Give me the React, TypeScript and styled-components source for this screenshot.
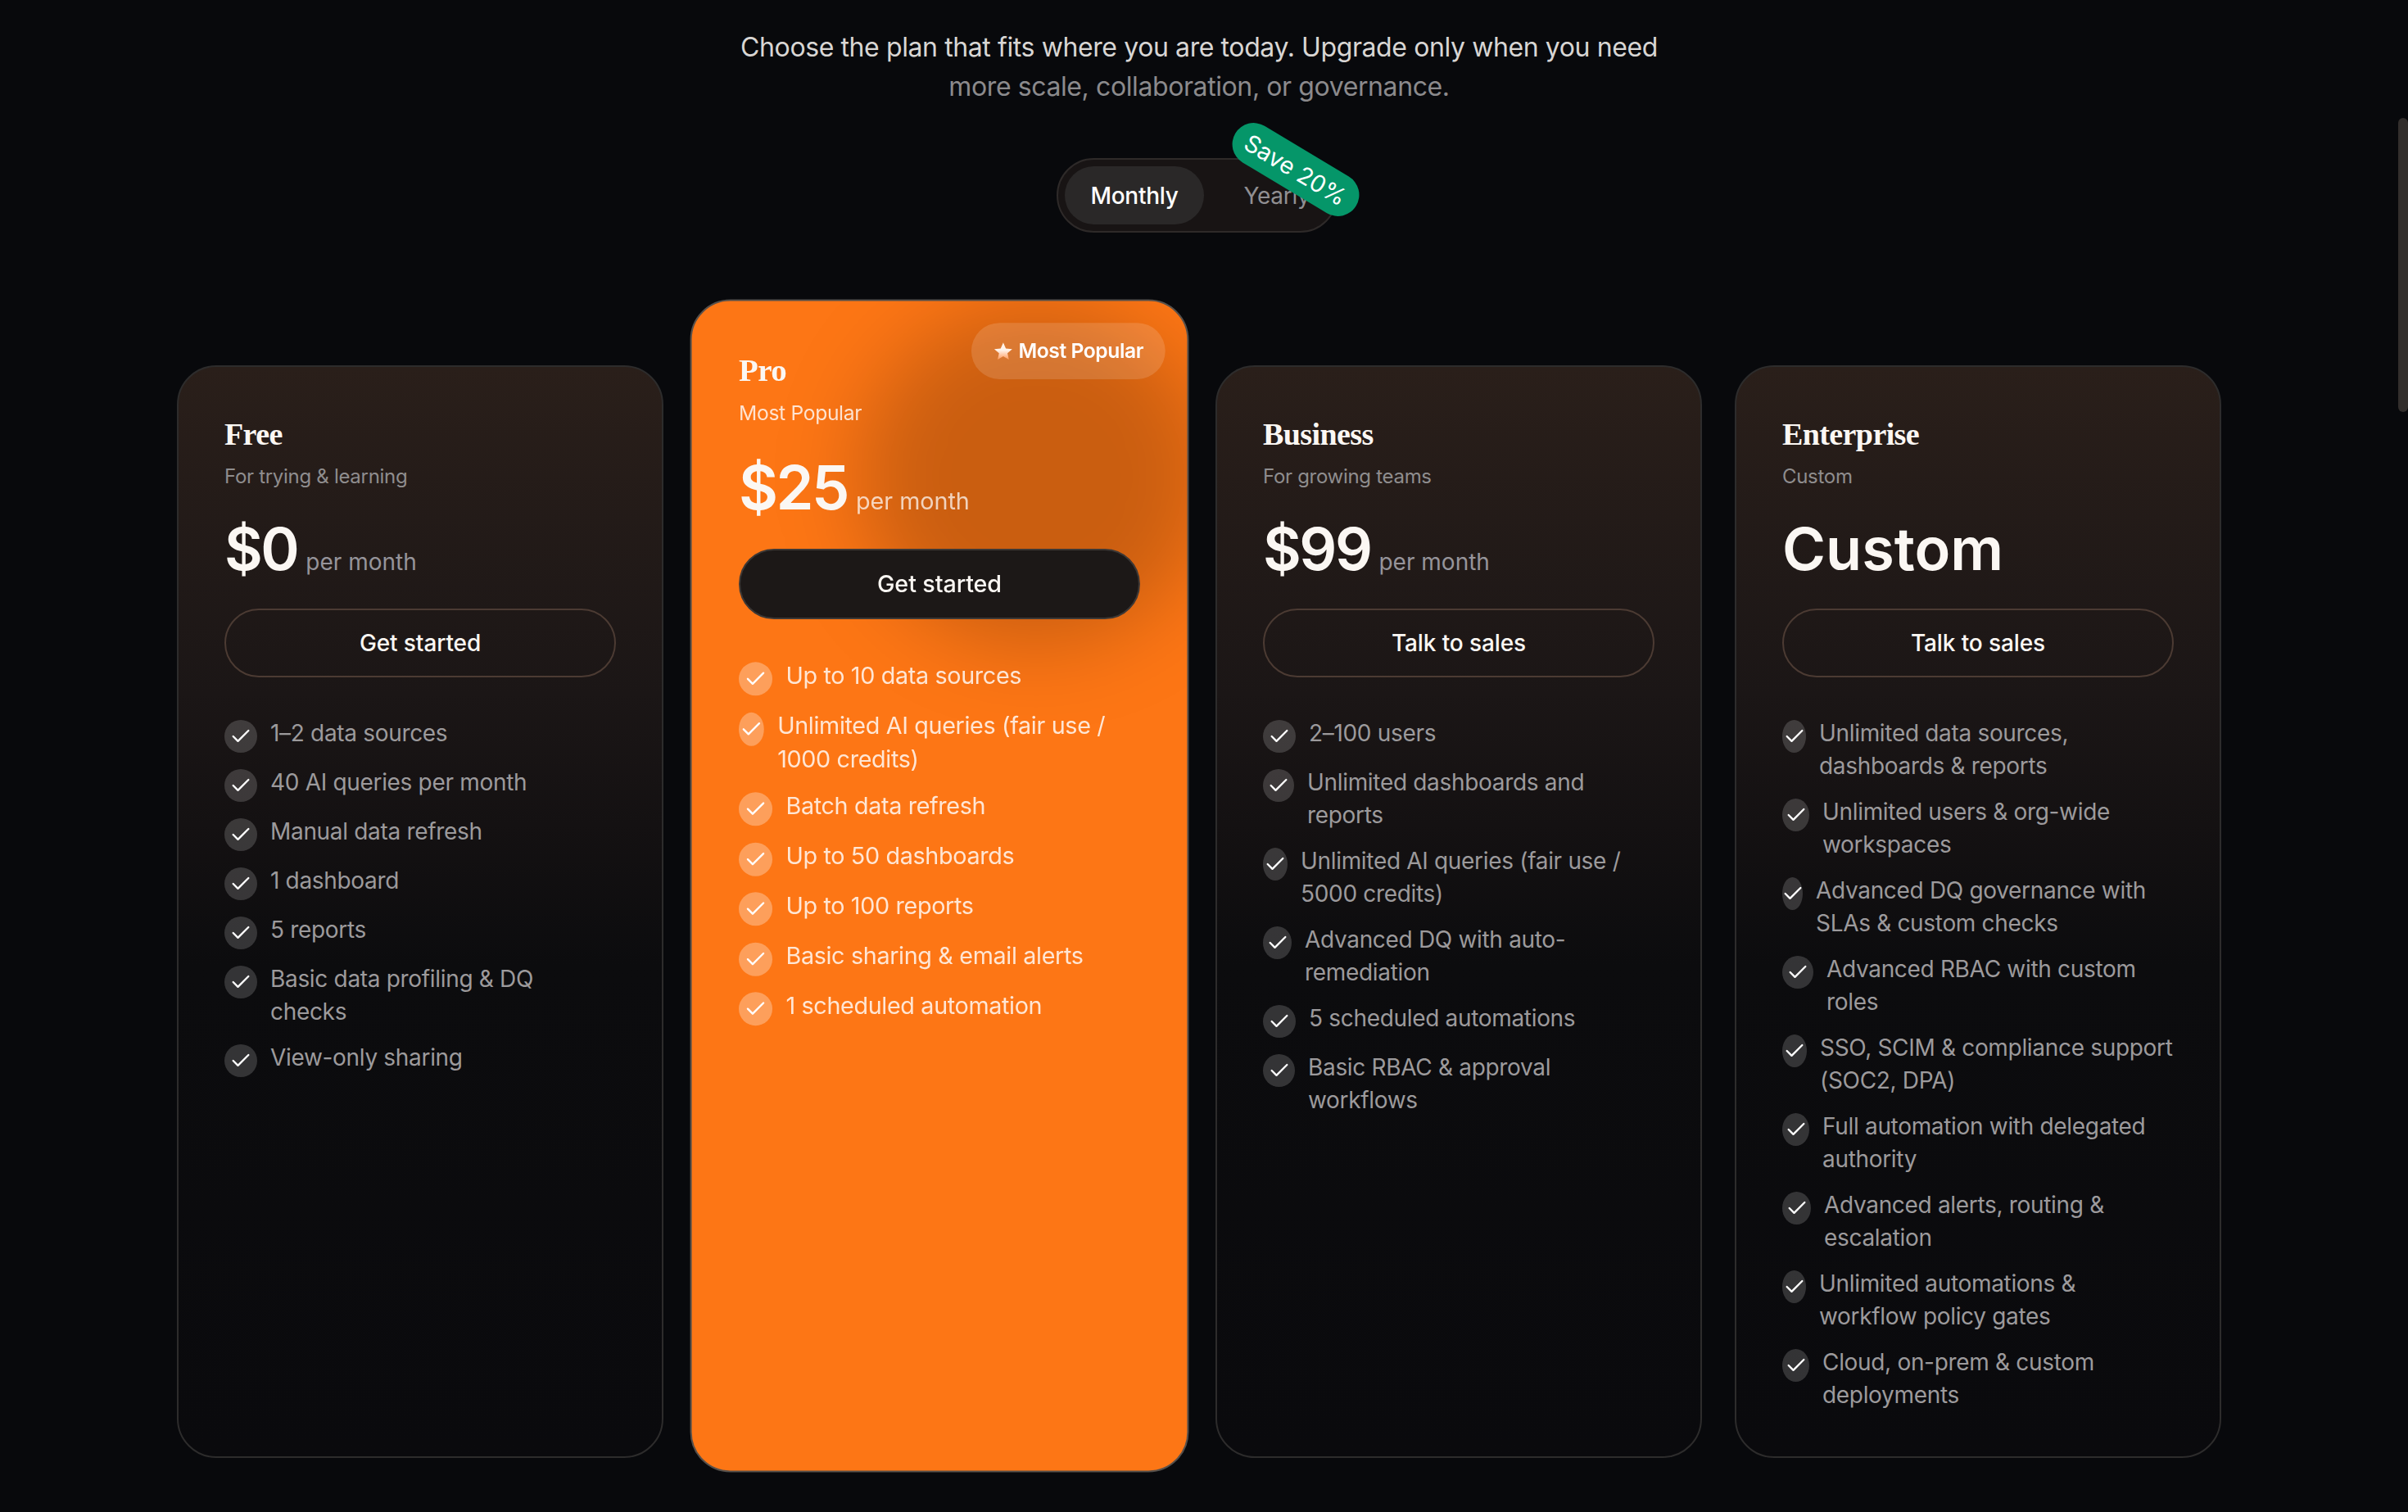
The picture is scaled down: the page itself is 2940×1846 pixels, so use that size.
import styled, { createGlobalStyle } from 'styled-components';
import { Check } from 'lucide-react';

const GlobalStyle = createGlobalStyle`
  html, body {
    margin: 0;
    height: 1846px;
    overflow: hidden;
    background: #08090c;
  }
  * {
    box-sizing: border-box;
  }
`;

const Page = styled.main`
  height: 1846px;
  padding: 34px 12px 0 0;
  display: flex;
  flex-direction: column;
  align-items: center;
  font-family: Inter, 'Noto Sans', sans-serif;
  color: #fff;
`;

const Intro = styled.p`
  margin: 0;
  text-align: center;
  font-size: 32px;
  line-height: 48px;
  letter-spacing: -0.4px;
  color: #d8d6d4;

  span {
    color: #8b8a8c;
  }
`;

const Toggle = styled.div`
  position: relative;
  width: 343px;
  height: 91px;
  margin: 63px 6px 0 0;
  padding: 8px;
  display: flex;
  gap: 16px;
  border: 2px solid #2e2a29;
  border-radius: 46px;
  background: #181414;
`;

const ToggleOption = styled.button<{ $active?: boolean }>`
  height: 71px;
  padding: ${({ $active }) => ($active ? '0 32px' : '0 0 0 32px')};
  border: 0;
  border-radius: 36px;
  font-family: inherit;
  font-size: 28px;
  font-weight: ${({ $active }) => ($active ? 500 : 400)};
  letter-spacing: -0.3px;
  color: ${({ $active }) => ($active ? '#fff' : '#918f92')};
  background: ${({ $active }) => ($active ? '#2a2828' : 'transparent')};
`;

const SaveBadge = styled.span`
  position: absolute;
  left: 204px;
  top: -14px;
  width: 172px;
  height: 52px;
  display: flex;
  align-items: center;
  justify-content: center;
  border-radius: 26px;
  transform: rotate(31deg);
  font-size: 29px;
  color: #fff;
  background: #059669;
`;

const PlanGrid = styled.section`
  width: 2496px;
  margin-top: 162px;
  display: grid;
  grid-template-columns: repeat(4, 594px);
  gap: 40px;
`;

const Card = styled.article<{ $featured?: boolean }>`
  position: relative;
  height: ${({ $featured }) => ($featured ? '1397px' : '1334px')};
  margin-top: ${({ $featured }) => ($featured ? '-63px' : '0')};
  padding: 56px;
  overflow: hidden;
  border: 2px solid ${({ $featured }) => ($featured ? '#56504b' : '#2d2c2c')};
  border-radius: 48px;
  transform: ${({ $featured }) => ($featured ? 'scale(1.025)' : 'none')};
  background: ${({ $featured }) =>
    $featured
      ? '#fd7615'
      : 'linear-gradient(180deg, #2a1f1a 0%, #1b1616 30%, #141112 42%, #0c0c0e 55%, #0a0a0d 100%)'};
`;

const Glow = styled.div`
  position: absolute;
  left: 200px;
  top: 6px;
  width: 420px;
  height: 404px;
  border-radius: 50%;
  background: rgba(0, 0, 0, 0.2);
  filter: blur(50px);
`;

const PopularBadge = styled.div`
  position: absolute;
  top: 26px;
  right: 26px;
  width: 231px;
  height: 67px;
  display: flex;
  align-items: center;
  justify-content: center;
  gap: 6px;
  border-radius: 34px;
  font-size: 24px;
  font-weight: 600;
  letter-spacing: -0.4px;
  color: #fff;
  background: rgba(255, 255, 255, 0.14);
`;

const CardBody = styled.div`
  position: relative;
`;

const PlanName = styled.h3`
  margin: 0;
  font-family: 'Liberation Serif', serif;
  font-size: 38px;
  line-height: 52px;
  font-weight: 700;
  letter-spacing: -0.6px;
  color: #fbf7f3;
`;

const PlanNote = styled.p<{ $featured?: boolean }>`
  margin: 10px 0 0;
  font-size: 24px;
  line-height: 32px;
  letter-spacing: -0.3px;
  color: ${({ $featured }) => ($featured ? 'rgba(255, 255, 255, 0.8)' : '#8f8d8e')};
`;

const PriceRow = styled.div`
  height: 80px;
  margin-top: 32px;
  display: flex;
  align-items: baseline;
  gap: 10px;
`;

const Price = styled.span<{ $word?: boolean }>`
  font-size: 72px;
  line-height: 80px;
  font-weight: 600;
  letter-spacing: ${({ $word }) => ($word ? '0' : '-2.5px')};
  color: #fbf7f3;
`;

const Period = styled.span<{ $featured?: boolean }>`
  font-size: 28px;
  color: ${({ $featured }) => ($featured ? 'rgba(255, 255, 255, 0.72)' : '#96949a')};
`;

const ActionButton = styled.button<{ $featured?: boolean }>`
  width: 100%;
  height: 84px;
  margin-top: 33px;
  border: 2px solid ${({ $featured }) => ($featured ? '#3d3835' : '#4c3b33')};
  border-radius: 42px;
  font-family: inherit;
  font-size: 28px;
  font-weight: 500;
  letter-spacing: -0.1px;
  color: #fbf7f3;
  background: ${({ $featured }) => ($featured ? '#1c1817' : 'transparent')};
`;

const FeatureList = styled.ul<{ $featured?: boolean }>`
  margin: ${({ $featured }) => ($featured ? '47px' : '48px')} 0 0;
  padding: 0;
  list-style: none;
  display: flex;
  flex-direction: column;
  gap: ${({ $featured }) => ($featured ? '15.5px' : '16px')};
`;

const FeatureItem = styled.li<{ $featured?: boolean }>`
  display: flex;
  gap: 16px;
  font-size: 28px;
  line-height: 40px;
  letter-spacing: -0.32px;
  color: ${({ $featured }) => ($featured ? 'rgba(255, 255, 255, 0.82)' : '#9c9a9c')};
`;

const FeatureText = styled.span`
  white-space: pre;
`;

const CheckMark = styled.span<{ $width: number; $featured?: boolean }>`
  flex: none;
  width: ${({ $width }) => $width}px;
  height: 40px;
  margin-top: 4px;
  display: flex;
  align-items: center;
  justify-content: center;
  border-radius: 50%;
  color: #fff;
  background: ${({ $featured }) =>
    $featured ? 'rgba(255, 255, 255, 0.3)' : 'rgba(255, 255, 255, 0.17)'};

  svg {
    flex: none;
  }
`;

const ScrollThumb = styled.div`
  position: fixed;
  top: 144px;
  right: 0;
  width: 12px;
  height: 359px;
  border-radius: 6px;
  background: #322e2c;
`;

type Feature = { text: string; width?: number };

type Plan = {
  name: string;
  note: string;
  price: string;
  period?: boolean;
  action: string;
  featured?: boolean;
  features: Feature[];
};

const plans: Plan[] = [
  {
    name: 'Free',
    note: 'For trying & learning',
    price: '$0',
    period: true,
    action: 'Get started',
    features: [
      { text: '1–2 data sources' },
      { text: '40 AI queries per month' },
      { text: 'Manual data refresh' },
      { text: '1 dashboard' },
      { text: '5 reports' },
      { text: 'Basic data profiling & DQ\nchecks' },
      { text: 'View-only sharing' },
    ],
  },
  {
    name: 'Pro',
    note: 'Most Popular',
    price: '$25',
    period: true,
    action: 'Get started',
    featured: true,
    features: [
      { text: 'Up to 10 data sources' },
      { text: 'Unlimited AI queries (fair use /\n1000 credits)', width: 30 },
      { text: 'Batch data refresh' },
      { text: 'Up to 50 dashboards' },
      { text: 'Up to 100 reports' },
      { text: 'Basic sharing & email alerts' },
      { text: '1 scheduled automation' },
    ],
  },
  {
    name: 'Business',
    note: 'For growing teams',
    price: '$99',
    period: true,
    action: 'Talk to sales',
    features: [
      { text: '2–100 users' },
      { text: 'Unlimited dashboards and\nreports', width: 38 },
      { text: 'Unlimited AI queries (fair use /\n5000 credits)', width: 30 },
      { text: 'Advanced DQ with auto-\nremediation', width: 35 },
      { text: '5 scheduled automations' },
      { text: 'Basic RBAC & approval\nworkflows', width: 39 },
    ],
  },
  {
    name: 'Enterprise',
    note: 'Custom',
    price: 'Custom',
    action: 'Talk to sales',
    features: [
      { text: 'Unlimited data sources,\ndashboards & reports', width: 29 },
      { text: 'Unlimited users & org-wide\nworkspaces', width: 33 },
      { text: 'Advanced DQ governance with\nSLAs & custom checks', width: 25 },
      { text: 'Advanced RBAC with custom\nroles', width: 38 },
      { text: 'SSO, SCIM & compliance support\n(SOC2, DPA)', width: 30 },
      { text: 'Full automation with delegated\nauthority', width: 33 },
      { text: 'Advanced alerts, routing &\nescalation', width: 35 },
      { text: 'Unlimited automations &\nworkflow policy gates', width: 29 },
      { text: 'Cloud, on-prem & custom\ndeployments', width: 33 },
    ],
  },
];

const StarIcon = () => (
  <svg width="24" height="24" viewBox="0 0 24 24" aria-hidden="true">
    <defs>
      <linearGradient id="star-fill" x1="0" y1="0" x2="0" y2="1">
        <stop offset="0.45" stopColor="#fff3ea" />
        <stop offset="1" stopColor="#ff9a5c" />
      </linearGradient>
    </defs>
    <path
      d="M12 1.5l3.1 7 7.6.7-5.7 5 1.7 7.5L12 17.8l-6.7 3.9L7 14.2l-5.7-5 7.6-.7z"
      fill="url(#star-fill)"
    />
  </svg>
);

const PlanCard = ({ plan }: { plan: Plan }) => (
  <Card $featured={plan.featured}>
    {plan.featured && <Glow />}
    {plan.featured && (
      <PopularBadge>
        <StarIcon />
        Most Popular
      </PopularBadge>
    )}
    <CardBody>
      <PlanName>{plan.name}</PlanName>
      <PlanNote $featured={plan.featured}>{plan.note}</PlanNote>
      <PriceRow>
        <Price $word={!plan.period}>{plan.price}</Price>
        {plan.period && <Period $featured={plan.featured}>per month</Period>}
      </PriceRow>
      <ActionButton $featured={plan.featured}>{plan.action}</ActionButton>
      <FeatureList $featured={plan.featured}>
        {plan.features.map((feature) => (
          <FeatureItem key={feature.text} $featured={plan.featured}>
            <CheckMark $width={feature.width ?? 40} $featured={plan.featured}>
              <Check size={28} strokeWidth={2} />
            </CheckMark>
            <FeatureText>{feature.text}</FeatureText>
          </FeatureItem>
        ))}
      </FeatureList>
    </CardBody>
  </Card>
);

export default function App() {
  return (
    <>
      <GlobalStyle />
      <Page>
        <Intro>
          Choose the plan that fits where you are today. Upgrade only when you need
          <br />
          <span>more scale, collaboration, or governance.</span>
        </Intro>
        <Toggle>
          <ToggleOption $active>Monthly</ToggleOption>
          <ToggleOption>Yearly</ToggleOption>
          <SaveBadge>Save 20%</SaveBadge>
        </Toggle>
        <PlanGrid>
          {plans.map((plan) => (
            <PlanCard key={plan.name} plan={plan} />
          ))}
        </PlanGrid>
      </Page>
      <ScrollThumb />
    </>
  );
}
